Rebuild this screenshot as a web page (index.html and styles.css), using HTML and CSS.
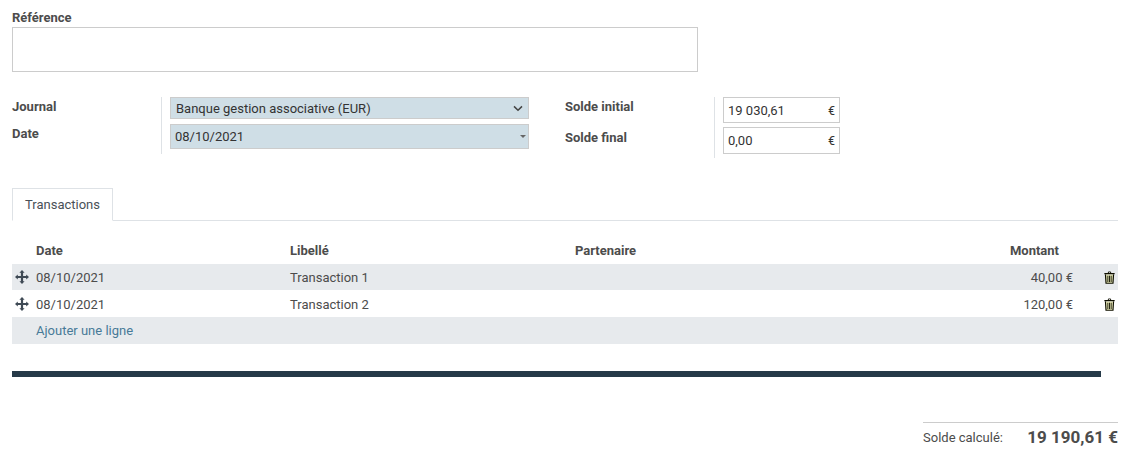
FILE: index.html
```html
<!DOCTYPE html>
<html lang="fr">
<head>
<meta charset="utf-8">
<title>Relevé</title>
<link rel="stylesheet" href="styles.css">
</head>
<body>
<main class="sheet">
  <div class="ref-label label">Référence</div>
  <div class="ref-box"></div>

  <section class="fields">
    <div class="labels-left">
      <div class="label l-journal">Journal</div>
      <div class="label l-date">Date</div>
    </div>
    <div class="col-left">
      <div class="select one">
        <span>Banque gestion associative (EUR)</span>
        <svg class="chev" viewBox="0 0 10 7" width="10" height="7"><path d="M1 1.4 5 5.2 9 1.4" fill="none" stroke="#444" stroke-width="1.5"/></svg>
      </div>
      <div class="select two">
        <span>08/10/2021</span>
        <i class="caret"></i>
      </div>
    </div>
    <div class="labels-right">
      <div class="label l-init">Solde initial</div>
      <div class="label l-final">Solde final</div>
    </div>
    <div class="col-right">
      <div class="money"><span>19 030,61</span><span class="eur">€</span></div>
      <div class="money"><span>0,00</span><span class="eur">€</span></div>
    </div>
  </section>

  <nav class="tabs"><div class="tab">Transactions</div></nav>

  <section class="table">
    <div class="row head">
      <span></span><span>Date</span><span>Libellé</span><span>Partenaire</span><span class="head-amt">Montant</span><span></span>
    </div>
    <div class="row shade first">
      <svg class="move" viewBox="0 0 14 14" width="14" height="14"><use href="#mv"/></svg>
      <span>08/10/2021</span><span>Transaction 1</span><span></span><span class="amt">40,00 €</span>
      <svg class="trash" viewBox="0 0 12 14" width="11" height="13"><use href="#tr"/></svg>
    </div>
    <div class="row second">
      <svg class="move" viewBox="0 0 14 14" width="14" height="14"><use href="#mv"/></svg>
      <span>08/10/2021</span><span>Transaction 2</span><span></span><span class="amt">120,00 €</span>
      <svg class="trash" viewBox="0 0 12 14" width="11" height="13"><use href="#tr"/></svg>
    </div>
    <div class="row shade">
      <span></span><a class="add-link">Ajouter une ligne</a>
    </div>
  </section>

  <div class="bar"></div>

  <section class="total">
    <div class="total-in"><span class="t-label">Solde calculé:</span><strong>19 190,61 €</strong></div>
  </section>
</main>
<svg width="0" height="0" class="defs">
  <defs>
    <g id="mv" fill="#3f4a55">
      <path d="M7 0 9.6 2.8H8.1V5.9H11.2V4.4L14 7 11.2 9.6V8.1H8.1V11.2H9.6L7 14 4.4 11.2H5.9V8.1H2.8V9.6L0 7 2.8 4.4V5.9H5.9V2.8H4.4Z"/>
    </g>
    <g id="tr">
      <path d="M1.6 3.8H10.4L9.8 13.4H2.2Z" fill="#e8e880" fill-opacity=".5"/>
      <path d="M4 2.1 4.9 .5h2.2L8 2.1H11.6V3.5H.4V2.1ZM5.1 2.1H6.9L6.5 1.4H5.5Z" fill="#0f0f00" fill-rule="evenodd"/>
      <path d="M1.6 3.6 2.2 13.3H9.8L10.4 3.6" fill="none" stroke="#0f0f00" stroke-width="1.3"/>
      <path d="M4.2 5V12M6 5V12M7.8 5V12" stroke="#0f0f00" stroke-width="1"/>
    </g>
  </defs>
</svg>
</body>
</html>
```
FILE: styles.css
```css
* { box-sizing: border-box; }
html, body { margin: 0; padding: 0; background: #fff; }
body { font: 13px/15px Roboto, "Liberation Sans", sans-serif; color: #4c4c4c; }
.sheet { width: 1127px; height: 464px; padding: 10px 9px 0 12px; overflow: hidden; }
.defs { display: block; height: 0; }
.label { font-weight: 700; color: #4c4c4c; }
.ref-label { height: 17px; }
.ref-box { width: 686px; height: 45px; border: 1px solid #cccccc; }

.fields { display: flex; margin-top: 25px; height: 61px; }
.labels-left { width: 149px; padding-top: 2px; }
.l-journal { height: 27px; }
.col-left { width: 368px; border-left: 1px solid #dee2e6; padding-left: 8px; height: 57px; }
.select { display: flex; align-items: center; justify-content: space-between; width: 359px; background: #cfdee6; border: 1px solid #cccccc; color: #333; }
.select.one { height: 22px; padding: 0 5px; }
.select.two { height: 25px; margin-top: 5px; padding: 0 2px 0 4px; }
.caret { width: 0; height: 0; border: 3px solid transparent; border-top-color: #666; border-bottom: 0; }
.labels-right { width: 149px; margin-left: 36px; padding-top: 2px; }
.l-init { height: 31px; }
.col-right { border-left: 1px solid #dee2e6; padding-left: 8px; width: 126px; }
.money { display: flex; justify-content: space-between; align-items: center; width: 117px; height: 26px; border: 1px solid #cccccc; padding: 0 4px; color: #333; margin-bottom: 4px; }
.money + .money { height: 27px; margin: 0; }
.eur { font-size: 12.5px; }

.tabs { margin-top: 30px; height: 33px; border-bottom: 1px solid #dee2e6; width: 1106px; }
.tab { width: 101px; height: 33px; border: 1px solid #dee2e6; border-bottom: 1px solid #fff; padding: 8px 0 0 12px; color: #495057; line-height: 16px; }

.table { margin-top: 20px; width: 1106px; }
.row { display: grid; grid-template-columns: 24px 254px 285px 1fr 110px 45px; align-items: center; height: 27px; }
.head { height: 23px; padding-bottom: 4px; font-weight: 700; }
.first { height: 26px; }
.second { padding-top: 1px; }
.head-amt { padding-right: 14px; text-align: right; }
.amt { text-align: right; }
.shade { background: #e7eaed; }
.row .move { margin-left: 3px; }
.row .trash { justify-self: end; margin-right: 3px; }
.add-link { color: #477a98; grid-column: 2 / span 2; }

.bar { margin-top: 27px; height: 6px; width: 1089px; background: #263a48; }

.total { display: flex; justify-content: flex-end; margin-top: 45px; width: 1106px; }
.total-in { width: 195px; border-top: 1px solid #ccc; display: flex; justify-content: space-between; align-items: center; height: 29px; }
.t-label { font-size: 13px; }
.total strong { font-size: 17px; font-weight: 700; }
```
